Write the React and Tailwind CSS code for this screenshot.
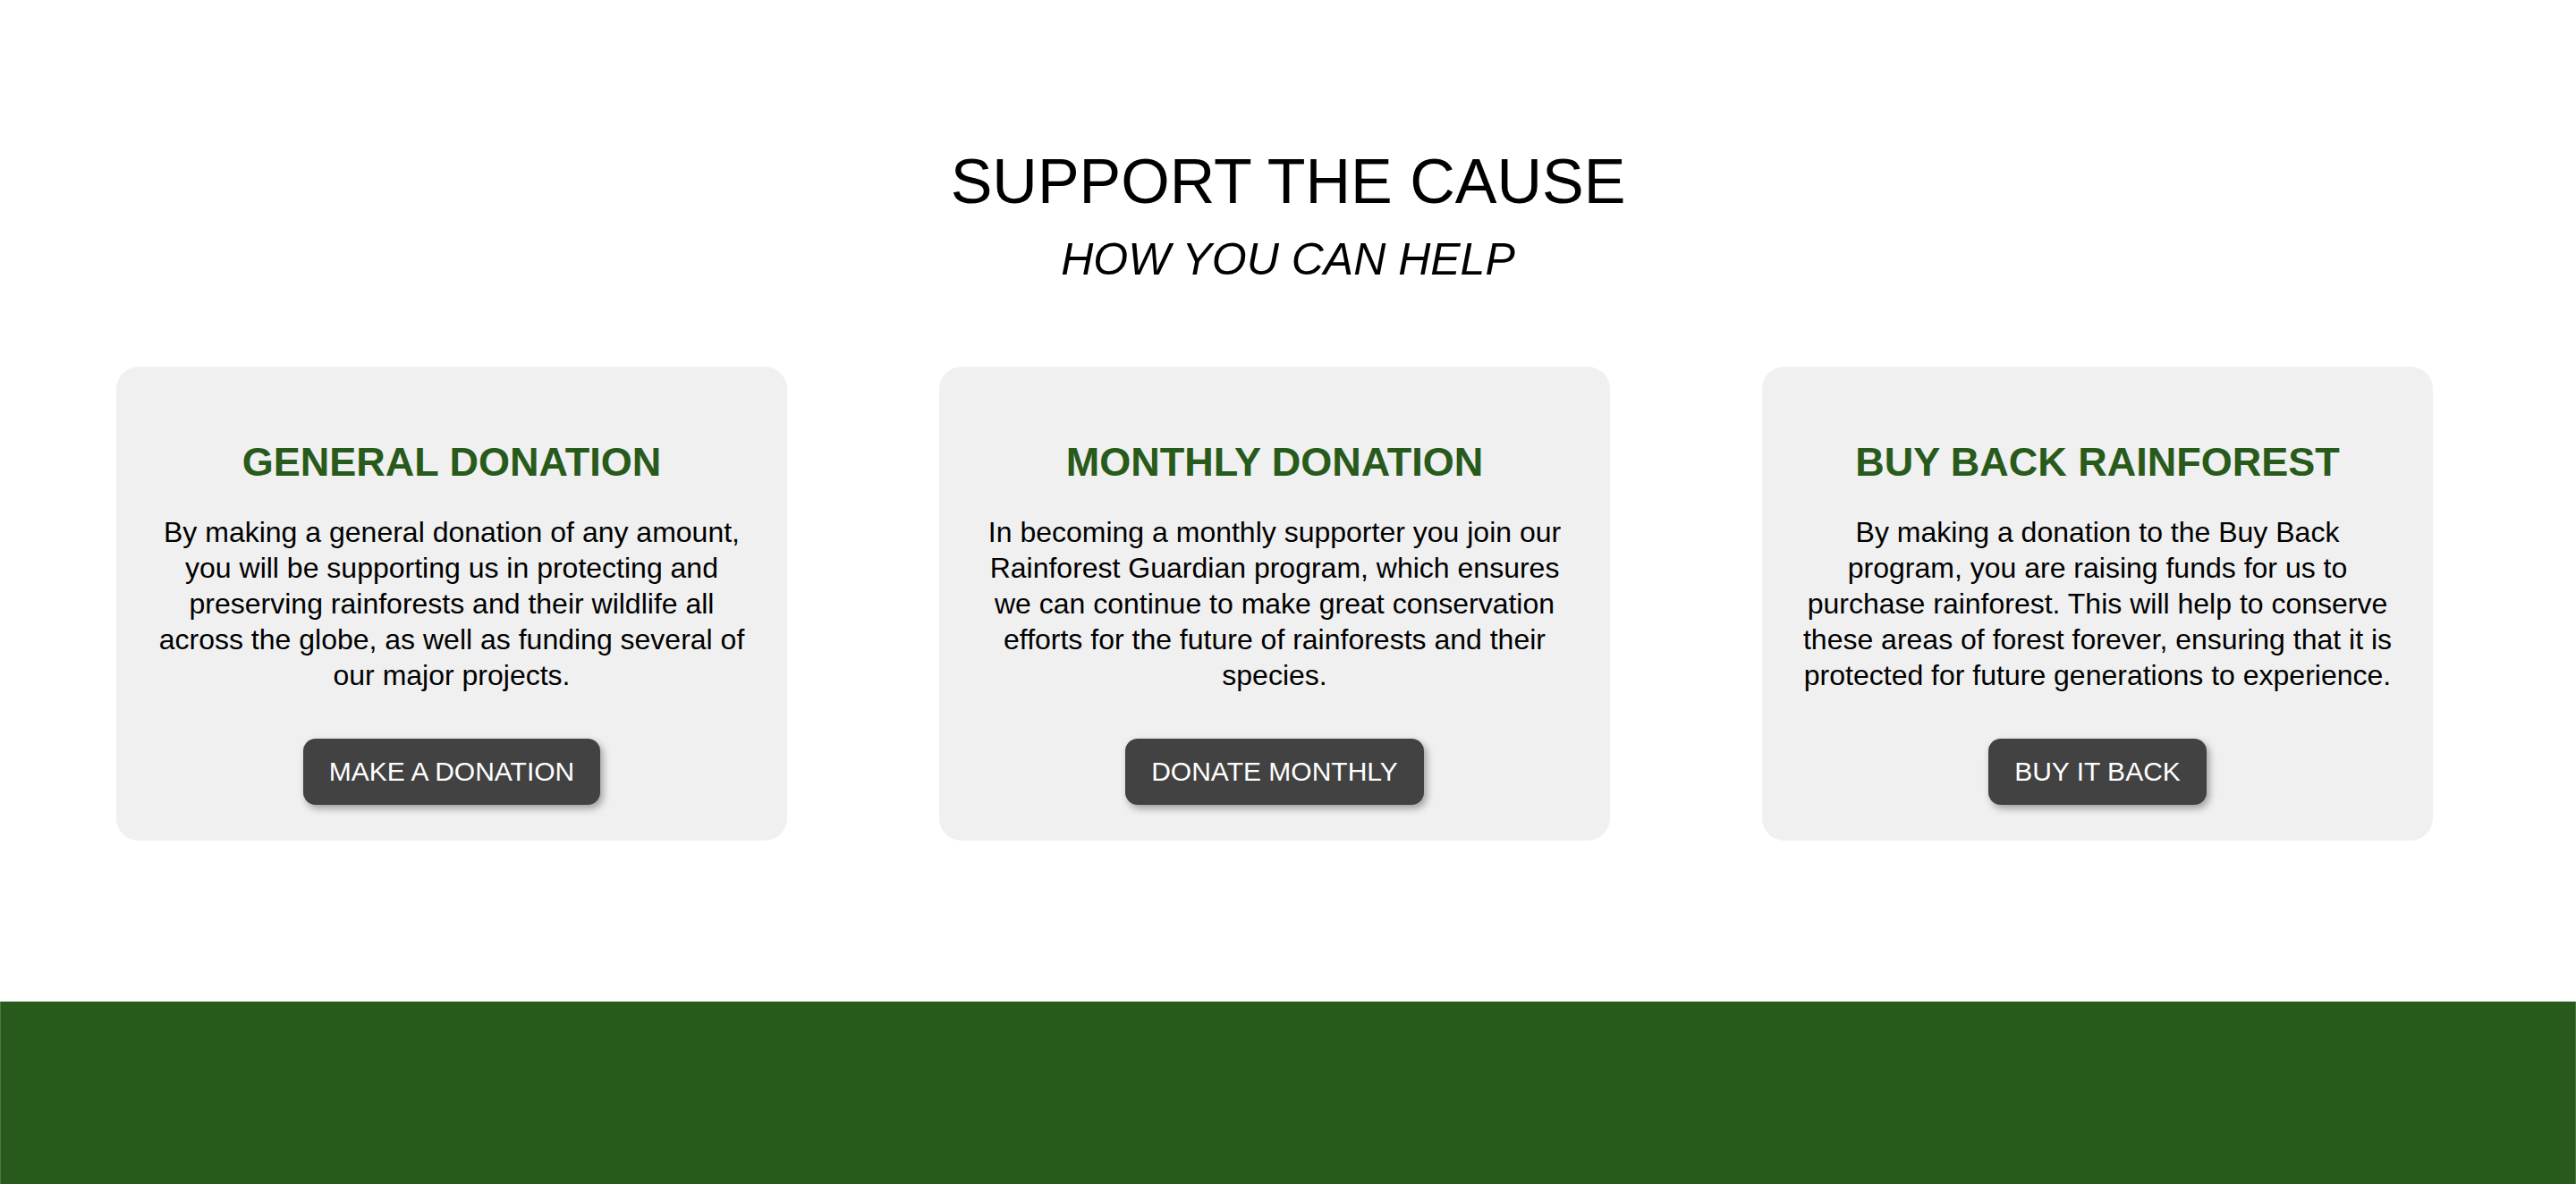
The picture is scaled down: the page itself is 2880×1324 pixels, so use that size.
import React from "react";

const cards = [
  {
    title: "GENERAL DONATION",
    text: "By making a general donation of any amount, you will be supporting us in protecting and preserving rainforests and their wildlife all across the globe, as well as funding several of our major projects.",
    button: "MAKE A DONATION",
  },
  {
    title: "MONTHLY DONATION",
    text: "In becoming a monthly supporter you join our Rainforest Guardian program, which ensures we can continue to make great conservation efforts for the future of rainforests and their species.",
    button: "DONATE MONTHLY",
  },
  {
    title: "BUY BACK RAINFOREST",
    text: "By making a donation to the Buy Back program, you are raising funds for us to purchase rainforest. This will help to conserve these areas of forest forever, ensuring that it is protected for future generations to experience.",
    button: "BUY IT BACK",
  },
];

function Card({ title, text, button }) {
  return (
    <div className="w-[750px] h-[530px] shrink-0 bg-[#f0f0f0] rounded-[25px] flex flex-col items-center pt-[80px] pb-[40px] px-[42px] text-center">
      <h3 className="text-[45px] leading-[53px] font-bold text-[#285a1b]">{title}</h3>
      <p className="mt-[32px] text-[32px] leading-[40px] text-black">{text}</p>
      <button className="mt-auto h-[74px] px-[29px] rounded-[14px] bg-[#424242] text-white text-[30px] leading-none shadow-[3px_4px_8px_rgba(0,0,0,0.35)]">
        {button}
      </button>
    </div>
  );
}

export default function App() {
  return (
    <div className="w-full min-h-[1324px] bg-white flex flex-col font-['Liberation_Sans',Arial,sans-serif]">
      <section className="flex flex-col items-center pt-[168px]">
        <h1 className="text-[70px] leading-[70px] text-black font-normal">SUPPORT THE CAUSE</h1>
        <h2 className="mt-[27px] text-[50px] leading-[50px] italic text-black font-normal">HOW YOU CAN HELP</h2>
      </section>
      <section className="flex gap-[170px] pl-[130px] pr-[160px] mt-[95px]">
        {cards.map((c) => (
          <Card key={c.title} {...c} />
        ))}
      </section>
      <footer className="mt-[180px] h-[204px] bg-[#285a1b] border-x border-[#4f7345]"></footer>
    </div>
  );
}
